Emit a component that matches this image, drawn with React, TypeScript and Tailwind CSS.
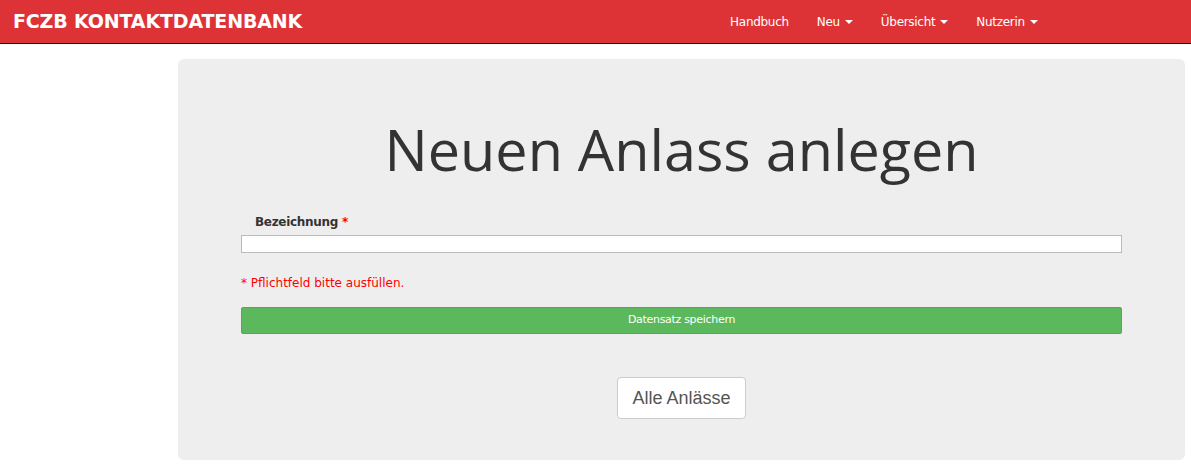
interface NavItem {
  label: string;
  dropdown: boolean;
}

const NAV_ITEMS: NavItem[] = [
  { label: "Handbuch", dropdown: false },
  { label: "Neu", dropdown: true },
  { label: "Übersicht", dropdown: true },
  { label: "Nutzerin", dropdown: true },
];

function Caret() {
  return (
    <span className="ml-[5px] inline-block h-0 w-0 border-x-[4px] border-t-[4px] border-x-transparent border-t-white align-middle" />
  );
}

export default function App() {
  return (
    <div className="min-h-[467px] bg-white font-['DejaVu_Sans',sans-serif]">
      {/* Navbar */}
      <header className="flex h-[44px] items-center border-b border-black bg-[#de3336]">
        <a
          href="#"
          className="ml-[13px] text-[19px] font-bold tracking-[-0.15px] text-white"
        >
          FCZB KONTAKTDATENBANK
        </a>
        <ul className="ml-[414px] flex items-center text-[12px] tracking-[-0.3px] text-white">
          {NAV_ITEMS.map((item) => (
            <li key={item.label} className="px-[14px]">
              <a href="#" className="flex items-center">
                {item.label}
                {item.dropdown && <Caret />}
              </a>
            </li>
          ))}
        </ul>
      </header>

      {/* Panel */}
      <main className="ml-[178px] mt-[15px] w-[1007px] rounded-[6px] bg-[#eeeeee] px-[63px] pb-[41px] pt-[50px]">
        <h1 className="text-center font-['Open_Sans',sans-serif] text-[57.5px] leading-[80px] text-[#333333]">
          Neuen Anlass anlegen
        </h1>

        <form className="mt-[26px]">
          <label className="ml-[14px] block h-[14px] text-[12px] leading-[14px] font-bold tracking-[-0.3px] text-[#333333]">
            Bezeichnung <span className="text-[#ff0000]">*</span>
          </label>
          <input
            type="text"
            className="mt-[6px] block h-[18px] w-full border border-[#bbbbbb] bg-white"
          />
          <p className="mt-[23px] text-[12px] leading-[14px] text-[#ff0000]">
            * Pflichtfeld bitte ausfüllen.
          </p>
          <button
            type="button"
            className="mt-[17px] block h-[27px] w-full rounded-[2px] border border-[#4cae4c] bg-[#5cb85c] text-[11px] tracking-[-0.3px] text-white"
          >
            Datensatz speichern
          </button>
        </form>

        <div className="mt-[43px] flex justify-center">
          <a
            href="#"
            className="flex h-[42px] items-center rounded-[4px] border border-[#cccccc] bg-white px-[14px] font-['Liberation_Sans',sans-serif] text-[18px] text-[#555555]"
          >
            Alle Anlässe
          </a>
        </div>
      </main>
    </div>
  );
}
